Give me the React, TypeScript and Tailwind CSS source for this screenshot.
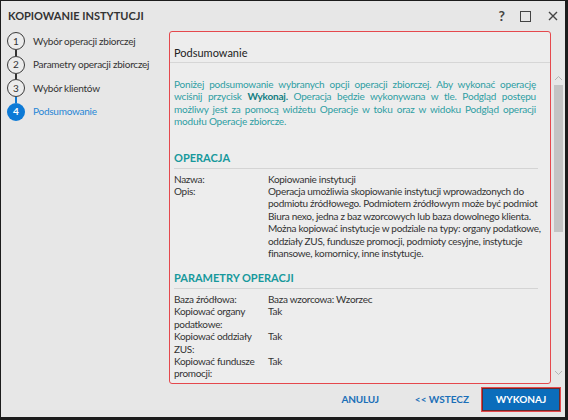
import React from "react";

const FONT = { fontFamily: 'Lato, "Noto Sans", sans-serif' };

const steps = [
  { n: 1, label: "Wybór operacji zbiorczej" },
  { n: 2, label: "Parametry operacji zbiorczej" },
  { n: 3, label: "Wybór klientów" },
  { n: 4, label: "Podsumowanie", active: true },
];

function Row({ label, children }: { label: React.ReactNode; children: React.ReactNode }) {
  return (
    <div className="flex">
      <div className="w-[90px] shrink-0">{label}</div>
      <div className="flex-1 pl-[4px]">{children}</div>
    </div>
  );
}

function Section({ title, children }: { title: string; children: React.ReactNode }) {
  return (
    <div>
      <div className="mr-[6px] text-[11px] leading-[16px] font-bold text-[#17999c] pb-[2px] border-b border-[#d4d4d4]">
        {title}
      </div>
      <div className="pt-[3.5px] text-[10px] leading-[12.4px] tracking-[-0.3px] text-[#333]">{children}</div>
    </div>
  );
}

export default function App() {
  return (
    <div
      className="w-[568px] h-[420px] bg-[#e7e7e7] border-l border-t border-r-[3px] border-b-[3px] border-[#1c1c1c] flex flex-col overflow-hidden"
      style={FONT}
    >
      {/* title bar */}
      <div className="h-[30px] shrink-0 flex items-center pl-[7px] pr-[7px]">
        <div className="flex-1 text-[11px] font-bold text-[#333] pt-[1px]">KOPIOWANIE INSTYTUCJI</div>
        <div className="flex items-center text-[#444]">
          <span className="text-[14px] font-bold leading-none mr-[15px]">?</span>
          <span className="w-[11px] h-[11px] border-[1.5px] border-[#444] mr-[17px]" />
          <svg width="10" height="10" viewBox="0 0 10 10">
            <path d="M1 1L9 9M9 1L1 9" stroke="#444" strokeWidth="1.4" />
          </svg>
        </div>
      </div>

      <div className="flex flex-1 min-h-0">
        {/* stepper */}
        <div className="w-[168px] shrink-0 pl-[6px] pt-[1px] flex flex-col">
          {steps.map((s, i) => (
            <React.Fragment key={s.n}>
              <div className="flex items-center h-[18px]">
                <span
                  className={`w-[18px] h-[18px] rounded-full flex items-center justify-center text-[10px] shrink-0 ${
                    s.active
                      ? "bg-[#0d7ad6] text-white font-bold"
                      : "border-[1.5px] border-[#3a3a3a] text-[#333] bg-[#ececec]"
                  }`}
                >
                  {s.n}
                </span>
                <span
                  className={`ml-[8px] text-[10px] tracking-[-0.25px] ${s.active ? "text-[#1f86d6]" : "text-[#333]"}`}
                >
                  {s.label}
                </span>
              </div>
              {i < steps.length - 1 && (
                <div className={`ml-[8.25px] w-[1.5px] h-[5.5px] ${i === 2 ? "bg-[#0d7ad6]" : "bg-[#333]"}`} />
              )}
            </React.Fragment>
          ))}
        </div>

        {/* summary panel */}
        <div className="flex flex-1 min-w-0">
          <div className="w-[382px] shrink-0 h-[353px] border border-[#e5484d] rounded-[3px] bg-[#ededed] flex flex-col">
            <div className="pt-[12px] pb-[1px] pl-[4px] text-[11px] leading-[17px] text-[#222] border-b border-[#d6d6d6]">
              Podsumowanie
            </div>
            <div className="flex-1 overflow-hidden pl-[4px] pr-[6px] pt-[15px]">
              <p className="mr-[8px] text-[10px] leading-[12.4px] tracking-[-0.2px] text-[#2e9ea3] text-justify">
                Poniżej podsumowanie wybranych opcji operacji zbiorczej. Aby wykonać operację wciśnij przycisk{" "}
                <b className="text-[#137e82]">Wykonaj.</b> Operacja będzie wykonywana w tle. Podgląd postępu możliwy
                jest za pomocą widżetu Operacje w toku oraz w widoku Podgląd operacji modułu Operacje zbiorcze.
              </p>
              <div className="mt-[22.5px]">
                <Section title="OPERACJA">
                  <Row label="Nazwa:">Kopiowanie instytucji</Row>
                  <Row label="Opis:">
                    Operacja umożliwia skopiowanie instytucji wprowadzonych do podmiotu źródłowego. Podmiotem
                    źródłowym może być podmiot Biura nexo, jedna z baz wzorcowych lub baza dowolnego klienta. Można
                    kopiować instytucje w podziale na typy: organy podatkowe, oddziały ZUS, fundusze promocji,
                    podmioty cesyjne, instytucje finansowe, komornicy, inne instytucje.
                  </Row>
                </Section>
              </div>
              <div className="mt-[11px]">
                <Section title="PARAMETRY OPERACJI">
                  <Row label="Baza źródłowa:">Baza wzorcowa: Wzorzec</Row>
                  <Row label="Kopiować organy podatkowe:">Tak</Row>
                  <Row label="Kopiować oddziały ZUS:">Tak</Row>
                  <Row label="Kopiować fundusze promocji:">Tak</Row>
                </Section>
              </div>
            </div>
          </div>

          {/* scrollbar */}
          <div className="w-[11px] ml-[2px] mt-[42px] h-[307px] flex flex-col items-center">
            <svg width="9" height="6" viewBox="0 0 9 6" className="mt-[2px]">
              <path d="M1 5L4.5 1.5L8 5" stroke="#b5b5b5" strokeWidth="1" fill="none" />
            </svg>
            <div className="w-[9px] h-[147px] mt-[4px] bg-[#c4c4c4]" />
            <div className="flex-1" />
            <svg width="9" height="6" viewBox="0 0 9 6" className="mb-[4px]">
              <path d="M1 1L4.5 4.5L8 1" stroke="#b5b5b5" strokeWidth="1" fill="none" />
            </svg>
          </div>
        </div>
      </div>

      {/* footer */}
      <div className="h-[35px] shrink-0 flex items-center justify-end pr-[4px] text-[10px] font-bold">
        <button className="text-[#1b6fb8] mr-[36px] tracking-[-0.2px]">ANULUJ</button>
        <button className="text-[#1b6fb8] mr-[12px]">&lt;&lt; WSTECZ</button>
        <button className="w-[80px] h-[25px] bg-[#0b6dbb] text-white border border-[#e5484d] outline outline-1 outline-[#6b2a2a] -outline-offset-2">
          WYKONAJ
        </button>
      </div>
    </div>
  );
}
